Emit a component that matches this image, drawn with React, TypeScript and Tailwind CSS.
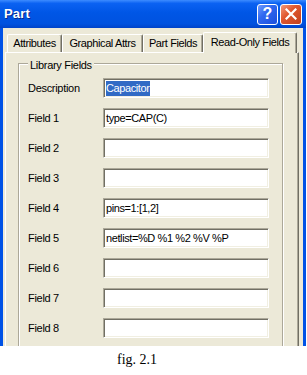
import React from "react";

const rows: { label: string; value: string; selected?: boolean }[] = [
  { label: "Description", value: "Capacitor", selected: true },
  { label: "Field 1", value: "type=CAP(C)" },
  { label: "Field 2", value: "" },
  { label: "Field 3", value: "" },
  { label: "Field 4", value: "pins=1:[1,2]" },
  { label: "Field 5", value: "netlist=%D %1 %2 %V %P" },
  { label: "Field 6", value: "" },
  { label: "Field 7", value: "" },
  { label: "Field 8", value: "" },
];

const tabs = [
  { name: "Attributes", w: "w-[55px]" },
  { name: "Graphical Attrs", w: "w-[81px]" },
  { name: "Part Fields", w: "w-[60px]" },
];

export default function App() {
  return (
    <div
      className="w-[307px] h-[375px] bg-white overflow-hidden text-black"
      style={{ fontFamily: '"Liberation Sans", Arial, sans-serif' }}
    >
      <div className="w-[306px] h-[346px] flex flex-col bg-[#ECE9D8] overflow-hidden">
        {/* Title bar */}
        <div className="h-[28px] shrink-0 flex items-center pl-[4px] pr-[4px] bg-[linear-gradient(180deg,#3d8cff_0%,#0b62f2_12%,#0056e6_45%,#0052df_85%,#0043c8_100%)]">
          <span className="text-white font-bold text-[13px] leading-[16px] tracking-[0.2px] [text-shadow:1px_1px_0_#0a2a8a]">
            Part
          </span>
          <div className="ml-auto flex gap-[2px]">
            <div className="w-[21px] h-[21px] rounded-[3px] border border-white bg-[linear-gradient(135deg,#6f9cff_0%,#2f68f0_40%,#1c4fdc_100%)] flex items-center justify-center">
              <span className="text-white font-bold text-[16px] leading-[16px]">?</span>
            </div>
            <div className="w-[22px] h-[21px] rounded-[3px] border border-white bg-[linear-gradient(135deg,#f39a7c_0%,#e0582f_40%,#c2401d_100%)] flex items-center justify-center">
              <svg width="12" height="12" viewBox="0 0 12 12">
                <path d="M1.5 1.5 L10.5 10.5 M10.5 1.5 L1.5 10.5" stroke="white" strokeWidth="2.2" strokeLinecap="square" />
              </svg>
            </div>
          </div>
        </div>

        {/* Body */}
        <div className="flex-1 min-h-0 flex flex-col border-x-[3px] border-[#0052e6] pl-[2px] pr-[4px] pt-[4px]">
          {/* Tabs */}
          <div className="flex items-end h-[20px] ml-[2px] text-[11px] tracking-[-0.4px] relative z-10">
            {tabs.map((t) => (
              <div
                key={t.name}
                className={`${t.w} h-[18px] flex items-center justify-center border-t border-l border-white border-r border-r-[#716F64] rounded-t-[2px] shadow-[inset_-1px_0_0_#ACA899] leading-[13px]`}
              >
                {t.name}
              </div>
            ))}
            <div className="w-[94px] h-[21px] mb-[-1px] pb-[2px] flex items-center justify-center bg-[#ECE9D8] border-t border-l border-white border-r border-r-[#716F64] rounded-t-[2px] shadow-[inset_-1px_0_0_#ACA899] leading-[13px]">
              Read-Only Fields
            </div>
          </div>

          {/* Panel */}
          <div className="w-[294px] flex-1 min-h-0 border-t border-l border-white border-r border-r-[#716F64] shadow-[inset_-1px_0_0_#ACA899] pl-[12px] pt-[10px]">
            <div className="relative w-[265px] h-[300px] border border-[#ACA899] shadow-[inset_1px_1px_0_#ffffff,1px_1px_0_#ffffff] pl-[9px] pt-[14px]">
              <span className="absolute top-[-5px] left-[9px] px-[2px] bg-[#ECE9D8] text-[11px] leading-[13px] tracking-[-0.3px]">
                Library Fields
              </span>
              <div className="flex flex-col gap-[10px]">
                {rows.map((r) => (
                  <div key={r.label} className="flex items-center h-[20px]">
                    <div className="w-[75px] text-[11px] leading-[13px] tracking-[-0.3px]">{r.label}</div>
                    <div className="w-[166px] h-[20px] bg-white border border-t-[#ACA899] border-l-[#ACA899] border-b-white border-r-white shadow-[inset_1px_1px_0_#716F64,inset_-1px_-1px_0_#F1EFE2] flex items-center pl-[2px] text-[11px] tracking-[-0.4px] whitespace-nowrap overflow-hidden">
                      {r.selected ? (
                        <span className="inline-block bg-[#316AC5] text-white leading-[15px] h-[15px] pr-[1px]">{r.value}</span>
                      ) : (
                        <span className="leading-[13px]">{r.value}</span>
                      )}
                    </div>
                  </div>
                ))}
              </div>
            </div>
          </div>
        </div>
      </div>

      {/* Caption */}
      <div
        className="pl-[117px] mt-[6px] text-[14px] leading-[16px]"
        style={{ fontFamily: '"Liberation Serif", "Times New Roman", serif' }}
      >
        fig. 2.1
      </div>
    </div>
  );
}
